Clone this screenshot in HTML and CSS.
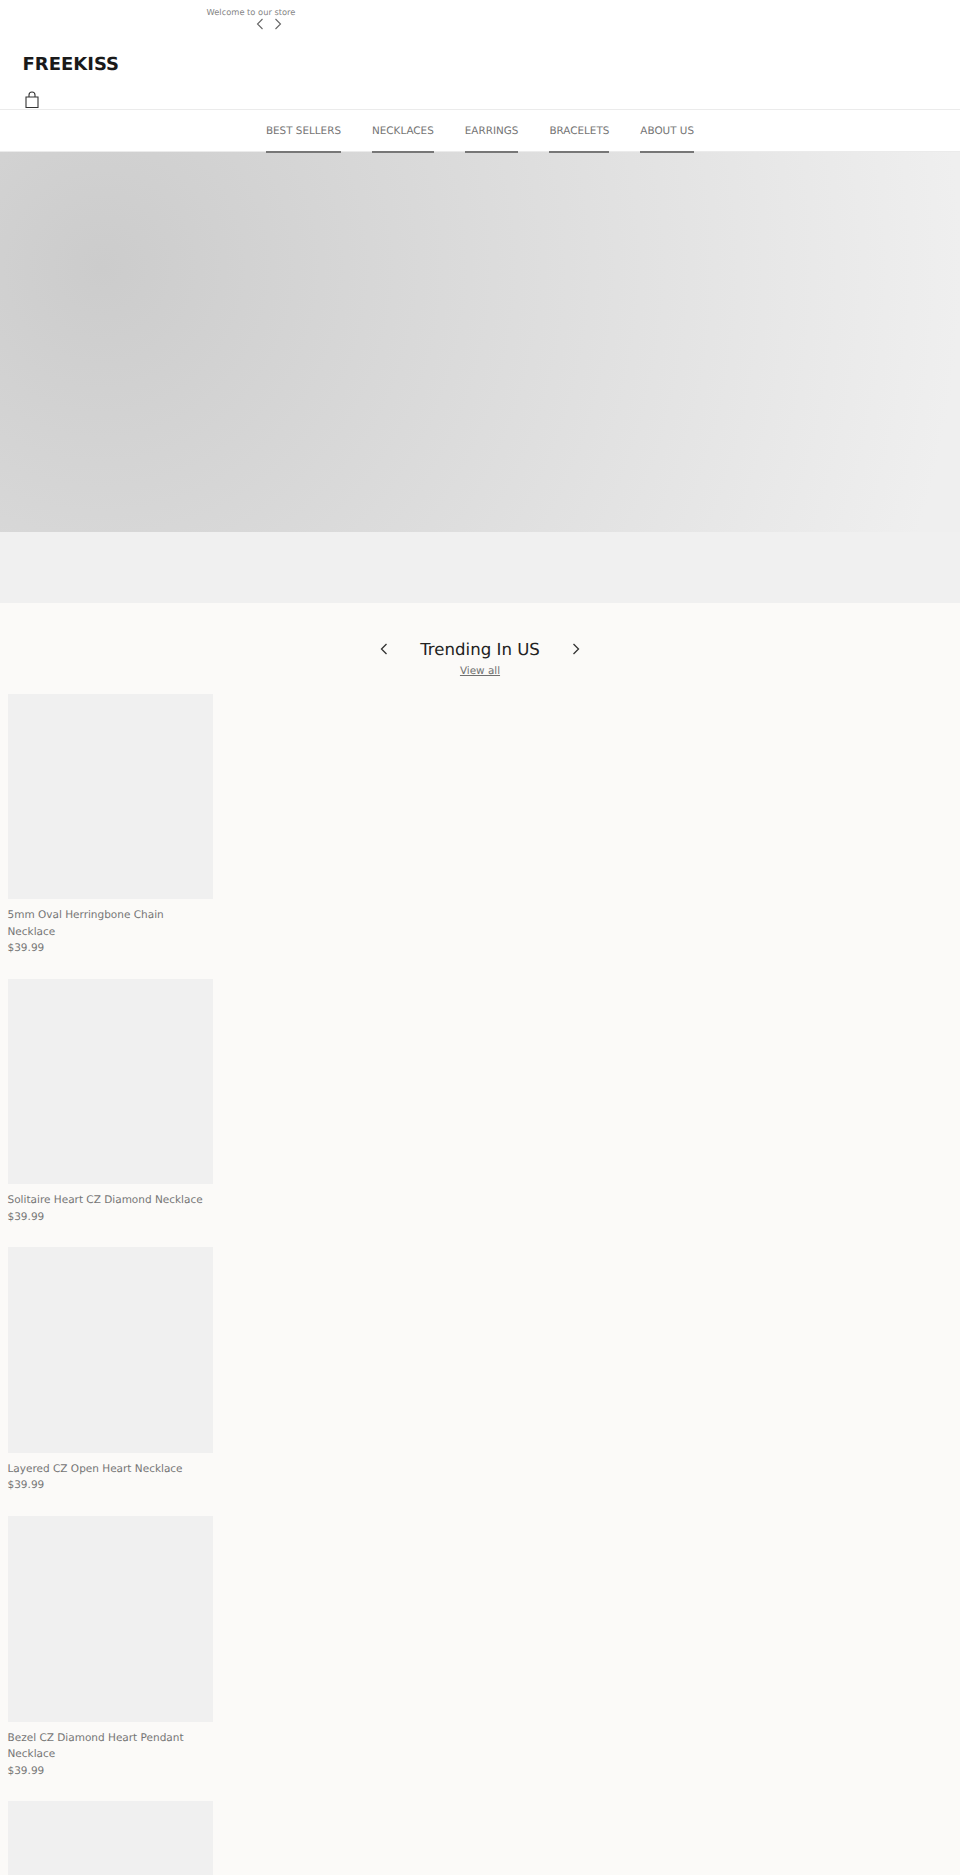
FILE: index.html
```html
<!DOCTYPE html>
<html lang="en">
<head>
    <meta charset="UTF-8">
    <meta name="viewport" content="width=device-width, initial-scale=1.0">
    <title>FREEKISS</title>
    <link rel="stylesheet" href="styles.css">
</head>
<body>
    <header class="header">
        <div class="announcement">
            <div class="announcement-text">Welcome to our store</div>
            <div class="announcement-arrows">
                <svg class="arrow-small" viewBox="0 0 10 12"><path d="M7.5 1l-5 5 5 5"/></svg>
                <svg class="arrow-small" viewBox="0 0 10 12"><path d="M2.5 1l5 5-5 5"/></svg>
            </div>
        </div>
        <div class="logo">FREEKISS</div>
        <svg class="bag" viewBox="0 0 14 18"><path d="M1 6h12v10.5H1zM4 6V4a3 3 0 0 1 6 0v2"/></svg>
    </header>

    <nav class="nav">
        <a class="nav-link">BEST SELLERS</a>
        <a class="nav-link">NECKLACES</a>
        <a class="nav-link">EARRINGS</a>
        <a class="nav-link">BRACELETS</a>
        <a class="nav-link">ABOUT US</a>
    </nav>

    <section class="hero">
        <div class="hero-image"></div>
    </section>

    <main class="trending">
        <div class="trending-head">
            <svg class="arrow" viewBox="0 0 10 12"><path d="M7.5 1l-5 5 5 5"/></svg>
            <h2>Trending In US</h2>
            <svg class="arrow" viewBox="0 0 10 12"><path d="M2.5 1l5 5-5 5"/></svg>
        </div>
        <a class="view-all">View all</a>

        <div class="products">
            <div class="product">
                <div class="product-image"></div>
                <div class="product-title">5mm Oval Herringbone Chain Necklace</div>
                <div class="product-price">$39.99</div>
            </div>
            <div class="product">
                <div class="product-image"></div>
                <div class="product-title">Solitaire Heart CZ Diamond Necklace</div>
                <div class="product-price">$39.99</div>
            </div>
            <div class="product">
                <div class="product-image"></div>
                <div class="product-title">Layered CZ Open Heart Necklace</div>
                <div class="product-price">$39.99</div>
            </div>
            <div class="product">
                <div class="product-image"></div>
                <div class="product-title">Bezel CZ Diamond Heart Pendant Necklace</div>
                <div class="product-price">$39.99</div>
            </div>
            <div class="product">
                <div class="product-image"></div>
            </div>
        </div>
    </main>
</body>
</html>
```

FILE: styles.css
```css
html, body {
    margin: 0;
    height: 1875px;
    overflow: hidden;
}
body {
    font-family: "DejaVu Sans", sans-serif;
    text-rendering: geometricPrecision;
    background: #fbfaf8;
    color: #757575;
}
.header {
    background: #fff;
    height: 109px;
    padding-left: 22.5px;
    display: flex;
    flex-direction: column;
    align-items: flex-start;
}
.announcement {
    width: 457px;
    padding-top: 7px;
    text-align: center;
}
.announcement-text {
    font-size: 8.3px;
    line-height: 11px;
    color: #858585;
}
.announcement-arrows {
    display: flex;
    justify-content: center;
    gap: 8px;
    height: 12px;
    margin-left: 36px;
}
.arrow-small {
    width: 10px;
    height: 12px;
    fill: none;
    stroke: #666;
    stroke-width: 1.1;
}
.logo {
    margin-top: 22.5px;
    font-size: 18px;
    line-height: 24px;
    font-weight: bold;
    color: #1a1a1a;
}
.bag {
    margin-top: 14.5px;
    margin-left: 2.5px;
    width: 14px;
    height: 18px;
    fill: none;
    stroke: #333;
    stroke-width: 1.1;
}
.nav {
    height: 43px;
    background: #fff;
    border-top: 1px solid #ebebeb;
    border-bottom: 1px solid #ebebeb;
    box-sizing: border-box;
    display: flex;
    justify-content: center;
    gap: 31px;
    position: relative;
}
.nav-link {
    font-size: 10.4px;
    line-height: 42px;
    height: 43px;
    color: #757575;
    border-bottom: 2px solid #777;
    box-sizing: border-box;
}
.hero {
    height: 451px;
    background: #f0f0f0;
}
.hero-image {
    height: 380px;
    background: radial-gradient(circle 860px at 101px 115px, #cccccc 0%, #efefef 100%);
}
.trending {
    padding: 32px 7.5px 0;
}
.trending-head {
    display: flex;
    justify-content: center;
    align-items: center;
    gap: 27px;
    height: 28px;
}
.trending-head h2 {
    margin: 0;
    font-size: 16.6px;
    font-weight: normal;
    color: #222;
    width: 128px;
    white-space: nowrap;
    text-align: center;
}
.arrow {
    width: 10px;
    height: 12px;
    fill: none;
    stroke: #333;
    stroke-width: 1.3;
}
.view-all {
    display: block;
    margin-top: 0.5px;
    text-align: center;
    font-size: 10.4px;
    line-height: 14px;
    text-decoration: underline;
    color: #707070;
}
.products {
    margin-top: 16px;
    width: 205px;
}
.product {
    margin-bottom: 22.2px;
}
.product-image {
    width: 205px;
    height: 205.5px;
    background: #f0f0f0;
    margin-bottom: 8px;
}
.product-title, .product-price {
    font-size: 10.5px;
    line-height: 16.5px;
}
```
